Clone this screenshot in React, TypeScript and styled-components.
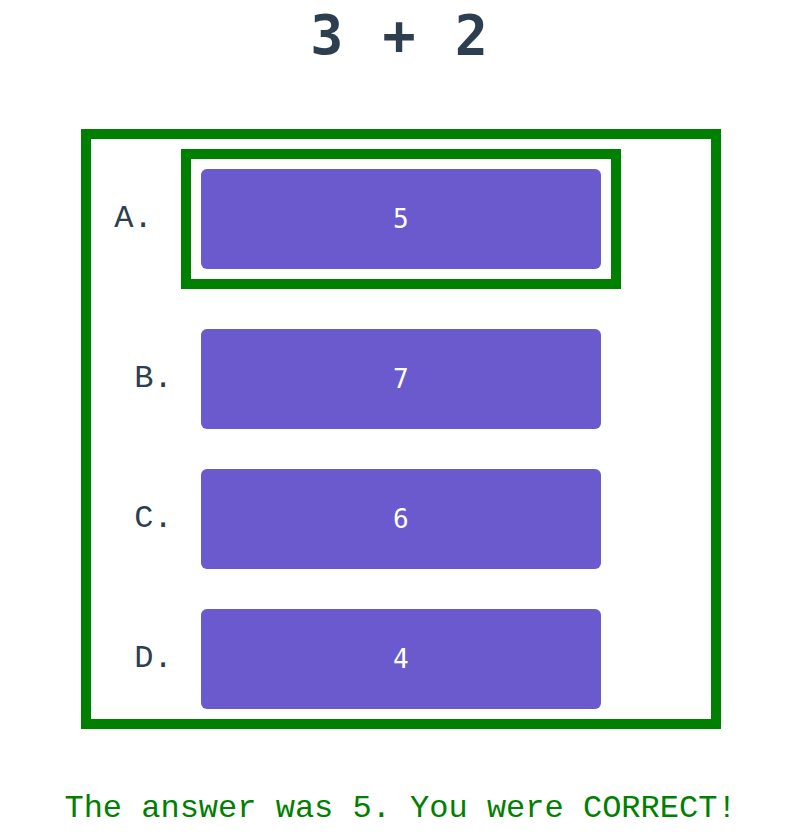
import React from "react"
import styled, { createGlobalStyle } from "styled-components"

type Option = {
    letter: string
    value: number
}

const options: Option[] = [
    { letter: "A", value: 5 },
    { letter: "B", value: 7 },
    { letter: "C", value: 6 },
    { letter: "D", value: 4 },
]

const selected = 5
const answer = 5

const GlobalStyle = createGlobalStyle`
    body {
        margin: 0;
        background: #fff;
        font-family: "Liberation Mono", "Courier New", monospace;
        color: #2c3e50;
    }
`

export default function App() {
    const correct = selected === answer
    return (
        <>
            <GlobalStyle />
            <Page>
                <Question>3 + 2</Question>
                <OptionsBox>
                    {options.map((option) => (
                        <Row key={option.letter}>
                            <Letter>{option.letter}.</Letter>
                            <Choice $selected={option.value === selected}>
                                <AnswerButton>{option.value}</AnswerButton>
                            </Choice>
                        </Row>
                    ))}
                </OptionsBox>
                <Result $correct={correct}>
                    The answer was {answer}. You were{" "}
                    {correct ? "CORRECT" : "WRONG"}!
                </Result>
            </Page>
        </>
    )
}

const Page = styled.div`
    display: flex;
    flex-direction: column;
    align-items: center;
`

const Question = styled.h1`
    margin: 0 0 59px;
    height: 70px;
    line-height: 70px;
    font-family: "DejaVu Sans Mono", monospace;
    font-weight: bold;
    font-size: 55px;
    letter-spacing: 3px;
    white-space: pre;
    color: #2c3e50;
`

const OptionsBox = styled.div`
    box-sizing: border-box;
    width: 640px;
    border: 10px solid green;
    padding: 10px 66px 10px 0;
    display: flex;
    flex-direction: column;
    gap: 40px;
`

const Row = styled.div`
    display: flex;
    align-items: center;
    justify-content: center;
`

const Letter = styled.span`
    margin-right: 28px;
    font-size: 32px;
    line-height: 40px;
    color: #2c3e50;
`

const Choice = styled.div<{ $selected: boolean }>`
    display: flex;
    padding: ${(p) => (p.$selected ? "10px" : "0")};
    border: ${(p) => (p.$selected ? "10px solid green" : "none")};
`

const AnswerButton = styled.button`
    width: 400px;
    height: 100px;
    border: none;
    border-radius: 6px;
    background: slateblue;
    color: #fff;
    font-family: "DejaVu Sans Mono", monospace;
    font-size: 26px;
    cursor: pointer;
`

const Result = styled.p<{ $correct: boolean }>`
    margin: 60px 0 0;
    font-size: 32px;
    line-height: 40px;
    color: ${(p) => (p.$correct ? "green" : "red")};
`
